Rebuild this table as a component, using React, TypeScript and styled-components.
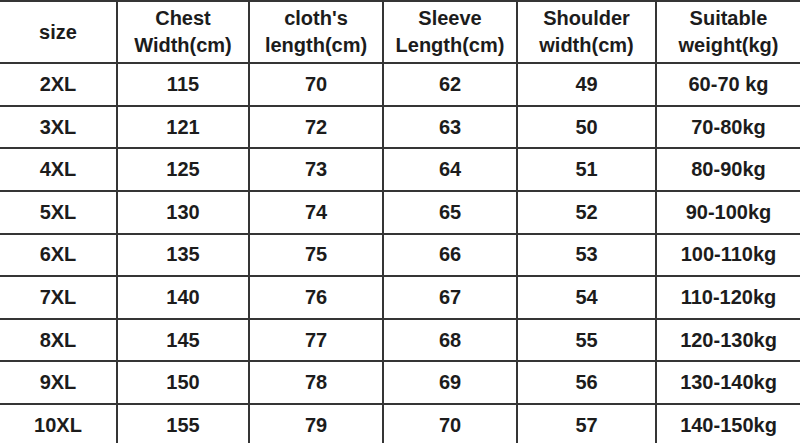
import React from 'react';
import styled, { createGlobalStyle } from 'styled-components';

const headers = [
  ['size'],
  ['Chest', 'Width(cm)'],
  ["cloth's", 'length(cm)'],
  ['Sleeve', 'Length(cm)'],
  ['Shoulder', 'width(cm)'],
  ['Suitable', 'weight(kg)'],
];

const rows = [
  ['2XL', '115', '70', '62', '49', '60-70 kg'],
  ['3XL', '121', '72', '63', '50', '70-80kg'],
  ['4XL', '125', '73', '64', '51', '80-90kg'],
  ['5XL', '130', '74', '65', '52', '90-100kg'],
  ['6XL', '135', '75', '66', '53', '100-110kg'],
  ['7XL', '140', '76', '67', '54', '110-120kg'],
  ['8XL', '145', '77', '68', '55', '120-130kg'],
  ['9XL', '150', '78', '69', '56', '130-140kg'],
  ['10XL', '155', '79', '70', '57', '140-150kg'],
];

const App: React.FC = () => (
  <>
    <GlobalStyle />
    <SizeTable>
      {headers.map((lines, i) => (
        <HeaderCell key={`h${i}`}>
          {lines.map((line) => (
            <span key={line}>{line}</span>
          ))}
        </HeaderCell>
      ))}
      {rows.map((row) =>
        row.map((value, i) => <Cell key={`${row[0]}-${i}`}>{value}</Cell>),
      )}
    </SizeTable>
  </>
);

export default App;

const GlobalStyle = createGlobalStyle`
  html, body {
    margin: 0;
    padding: 0;
    background: #ffffff;
    height: 443px;
    overflow: hidden;
  }
`;

const SizeTable = styled.div`
  width: 800px;
  display: grid;
  grid-template-columns: 116px 130px 132px 132px 137px 143px;
  grid-template-rows: 60.3px repeat(9, 40.6px);
  gap: 2px;
  padding-top: 2px;
  background-color: #353535;
  font-family: 'Liberation Sans', Arial, sans-serif;
  font-weight: 700;
  font-size: 20px;
  color: #1c1c1c;
`;

const Cell = styled.div`
  background-color: #ffffff;
  display: flex;
  align-items: center;
  justify-content: center;
  white-space: nowrap;
`;

const HeaderCell = styled(Cell)`
  flex-direction: column;
  line-height: 27px;
`;
